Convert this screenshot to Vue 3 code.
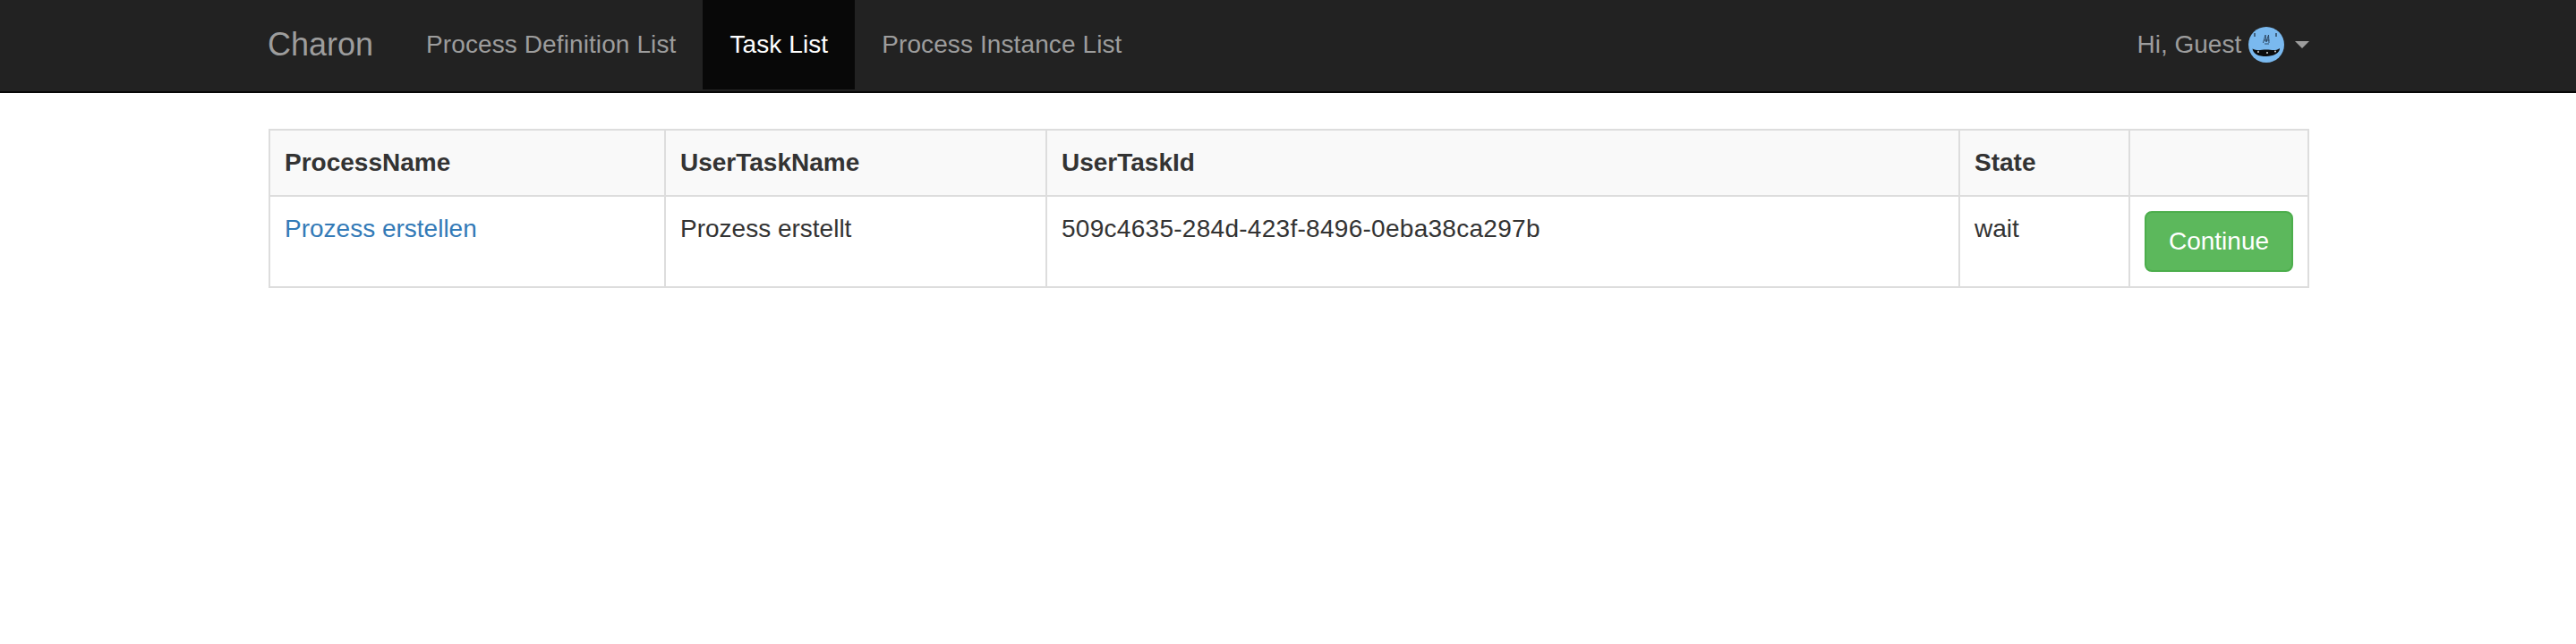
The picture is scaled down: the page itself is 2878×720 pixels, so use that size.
<script setup>
const navLinks = [
  { label: 'Process Definition List', active: false },
  { label: 'Task List', active: true },
  { label: 'Process Instance List', active: false },
]
const columns = [
  { label: 'ProcessName', width: 442 },
  { label: 'UserTaskName', width: 426 },
  { label: 'UserTaskId', width: 1020 },
  { label: 'State', width: 190 },
  { label: '', width: 200 },
]
</script>

<template>
  <div class="page">
    <nav class="navbar">
      <div class="bar">
        <a class="brand">Charon</a>
        <a v-for="l in navLinks" :key="l.label" class="link" :class="{ active: l.active }">{{ l.label }}</a>
        <a class="user">
          Hi, Guest
          <svg class="avatar" viewBox="0 0 40 40" width="40" height="40">
            <circle cx="20" cy="20" r="20" fill="#7ab9ef" />
            <path d="M4.500 24.500 C10 27.500 14 25.500 20 25.500 C26 25.500 30 27.500 35 24 C35 29.500 28 33 20 33 C11 33 5.500 30.500 4.500 24.500 Z" fill="#0a0a0a" />
            <circle cx="11" cy="28" r="0.900" fill="#e8e8e8" />
            <circle cx="21" cy="29" r="0.900" fill="#e8e8e8" />
            <circle cx="30" cy="27.500" r="0.900" fill="#e8e8e8" />
            <path d="M7 7 V11 M31 7 V11" stroke="#1c2a3a" stroke-width="1.200" />
            <path d="M16.500 18 L19 9 L20 17 L22.500 9 L23 18 M17 15 H23.500 M18 19 H23" stroke="#2f4a66" stroke-width="1" fill="none" />
          </svg>
          <span class="caret"></span>
        </a>
      </div>
    </nav>
    <main class="content">
      <table class="table">
        <colgroup>
          <col v-for="c in columns" :key="c.label" :style="{ width: c.width + 'px' }" />
        </colgroup>
        <thead>
          <tr>
            <th v-for="c in columns" :key="c.label">{{ c.label }}</th>
          </tr>
        </thead>
        <tbody>
          <tr>
            <td><a class="task-link">Prozess erstellen</a></td>
            <td>Prozess erstellt</td>
            <td class="task-id">509c4635-284d-423f-8496-0eba38ca297b</td>
            <td>wait</td>
            <td><button class="btn">Continue</button></td>
          </tr>
        </tbody>
      </table>
    </main>
  </div>
</template>

<style>
html, body { margin: 0; background: #fff; }
</style>

<style scoped>
.page {
  font-family: "Liberation Sans", Arial, sans-serif;
  font-size: 28px;
  line-height: 40px;
  color: #333;
  padding-left: 2px;
}
.navbar {
  background: #222;
  border-bottom: 2px solid #080808;
  height: 102px;
  margin-left: -2px;
  padding-left: 2px;
}
.bar {
  display: flex;
  width: 2280px;
  height: 100px;
  margin: 0 auto;
}
.brand {
  font-size: 36px;
  color: #9d9d9d;
  line-height: 100px;
  margin-left: -1px;
  padding-right: 29px;
}
.link {
  color: #9d9d9d;
  line-height: 100px;
  padding: 0 30px;
  letter-spacing: 0.1px;
}
.link.active {
  color: #fff;
  background: #080808;
}
.user {
  margin-left: auto;
  color: #9d9d9d;
  display: flex;
  align-items: center;
  white-space: pre;
}
.avatar {
  display: block;
}
.caret {
  width: 0;
  height: 0;
  margin-left: 12px;
  border-top: 8px solid #9d9d9d;
  border-left: 8px solid transparent;
  border-right: 8px solid transparent;
}
.content {
  width: 2280px;
  margin: 0 auto;
  padding-top: 40px;
}
.table {
  width: 2280px;
  border-collapse: collapse;
  table-layout: fixed;
  border: 2px solid #ddd;
}
th, td {
  border: 2px solid #ddd;
  padding: 16px;
  text-align: left;
  vertical-align: top;
}
th { font-weight: 700; background: #f9f9f9; height: 40px; }
.task-id { letter-spacing: 0.28px; }
.task-link { color: #337ab7; }
.btn {
  display: block;
  width: 166px;
  height: 68px;
  font: inherit;
  color: #fff;
  background: #5cb85c;
  border: 2px solid #4cae4c;
  border-radius: 8px;
  padding: 0;
}
</style>
